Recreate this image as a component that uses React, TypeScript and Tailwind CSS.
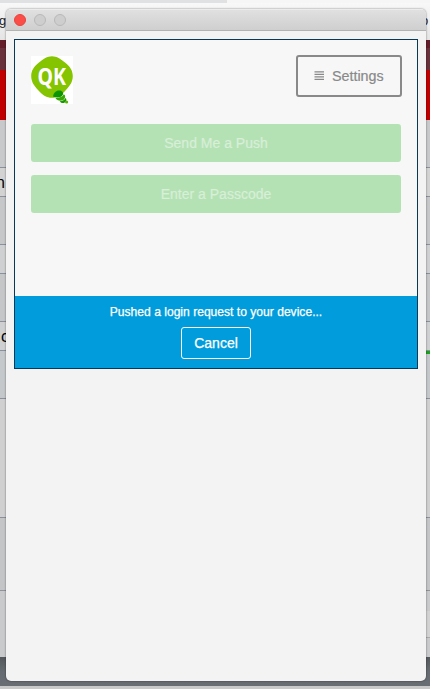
const strips = [
  'h-[3px] bg-[#e0e1e3]',
  'h-[37px] bg-gradient-to-b from-[#f8f8f9] to-[#e4e4e4]',
  'h-2 bg-[#641e29]',
  'h-[22px] bg-[#69313a]',
  'h-[50px] bg-[#c00000]',
  'h-12 border-b border-[#8a909d] bg-[#c7c9cb]',
  'h-[29px] border-b border-[#8a909d] bg-[#d3d3d4]',
  'h-12 border-b border-[#8a909d] bg-[#c5c7c9]',
  'h-[29px] border-b border-[#8a909d] bg-[#cfd0d1]',
  'h-12 border-b border-[#8a909d] bg-[#c4c6c8]',
  'h-[29px] border-b border-[#8a909d] bg-[#cfd0d1]',
  'h-12 border-b border-[#8a909d] bg-[#c5c8ca]',
  'h-[119px] border-b border-[#8a909d] bg-[#d0d0d0]',
  'h-[73px] border-b border-[#90939a] bg-[#c3c5c6]',
  'h-[66px] bg-[#c9cacb]',
  'h-[29px] bg-gradient-to-b from-[#54585c] via-[#656b70] to-[#686e73]',
  'h-[3px] bg-[#c9c9c9]',
]

function Backdrop() {
  return (
    <div className="absolute inset-0 flex flex-col overflow-hidden text-[#222]">
      {strips.map((strip, i) => (
        <div key={i} className={`shrink-0 ${strip}`} />
      ))}
      <div className="absolute left-[227px] top-0 h-[3px] w-[203px] bg-[#f6f6f7]" />
      <span className="absolute -left-px top-[13px] text-[13px] leading-4">g</span>
      <span className="absolute left-[421px] top-[13px] text-[13px] leading-4">o</span>
      <span className="absolute -left-[4px] top-[174px] text-base leading-[18px] text-black">n.</span>
      <span className="absolute left-px top-[328px] text-base leading-[18px] text-black">c</span>
      <div className="absolute right-0 top-[351px] h-[3px] w-1 bg-[#18a51c]" />
      <div className="absolute right-0 top-[611px] h-[27px] w-1 border-b border-[#a9aaab] bg-[#d2d2d2]" />
    </div>
  )
}

function TitleBar() {
  return (
    <div className="flex h-[22px] shrink-0 items-center gap-2 border-b border-t border-b-[#b3b3b3] border-t-[#ececec] bg-gradient-to-b from-[#e0e0e0] to-[#cfcfcf] pl-2">
      <span className="size-3 rounded-full border border-[#e8433d] bg-[#fc4e48]" />
      <span className="size-3 rounded-full border border-[#b8b8b8] bg-[#cecece]" />
      <span className="size-3 rounded-full border border-[#b8b8b8] bg-[#cecece]" />
    </div>
  )
}

function Logo() {
  return (
    <svg className="h-12 w-[42px] bg-white" viewBox="0 0 42 48">
      <path
        d="M21 .2C26 .2 29.500 3 34 6.500C39 10.500 41.800 14.500 41.800 20C41.800 26 39 29.500 34.500 34.500C30 39.500 26.500 41.800 21 41.800C15.500 41.800 12 39.500 7.500 34.500C3 29.500 .2 26 .2 20C.2 14.500 3 10.500 8 6.500C12.500 3 16 .2 21 .2Z"
        fill="#84c400"
      />
      <path
        d="M22 40.500C22.500 37 25 34.600 28 34.600C31 34.600 32.600 36.500 32 38.600C30.500 41.500 26.500 42.500 22 40.500Z"
        fill="#0c9500"
      />
      <path
        d="M24.500 42C28.500 42 31.500 40.800 32.800 38.300C34.800 39.500 34.600 42 32.700 43.700C30 45.500 26 45 24.500 42Z"
        fill="#3aa800"
      />
      <path d="M28.800 45.200C31.600 45.200 33.800 44 34.500 42C36.200 43.500 35.300 46 32.900 46.900C31 47.300 29.400 46.700 28.800 45.200Z" fill="#159700" />
      <circle cx="35.600" cy="46" r="1.600" fill="#58b400" />
      <text
        x="6.500"
        y="29.300"
        fill="#fff"
        fontFamily="'Noto Sans', sans-serif"
        fontSize="23"
        fontWeight="700"
        textLength="28.500"
        lengthAdjust="spacingAndGlyphs"
      >
        QK
      </text>
    </svg>
  )
}

function ActionButton({ label }: { label: string }) {
  return (
    <button className="h-[38px] w-full rounded-[3px] bg-[#b5e2b5] text-[14px] leading-5 text-[#d8efd8] [-webkit-text-stroke:0.2px]">
      {label}
    </button>
  )
}

export default function App() {
  return (
    <div className="relative h-[689px] w-[430px] overflow-hidden px-1.5 pt-[9px] font-['Liberation_Sans',Arial,sans-serif]">
      <Backdrop />
      <div className="relative flex h-[672px] w-[420px] flex-col overflow-hidden rounded-[5px] bg-[#f3f3f3] shadow-[0_0_2px_rgba(0,0,0,0.55)]">
        <TitleBar />
        <main className="mx-2 mt-2 flex h-[330px] flex-col border border-[#083a58] bg-[#f7f7f7]">
          <header className="flex items-start justify-between pl-4 pr-[15px] pt-[15px]">
            <div className="pt-px">
              <Logo />
            </div>
            <button className="flex h-[42px] w-[106px] items-center gap-[7px] rounded-[3px] border-2 border-[#898989] pl-4 text-[14.3px] leading-5 text-[#898989] [-webkit-text-stroke:0.2px]">
              <svg className="mb-px h-[9px] w-[11px]" viewBox="0 0 11 9" stroke="#898989" strokeWidth="1.300">
                <path d="M.5 .8H10M.5 3.300H10M.5 5.800H10M.5 8.300H10" />
              </svg>
              Settings
            </button>
          </header>
          <div className="mt-5 flex flex-col gap-[13px] px-4">
            <ActionButton label="Send Me a Push" />
            <ActionButton label="Enter a Passcode" />
          </div>
          <footer className="mt-auto flex h-[72px] flex-col items-center bg-[#009cdc] pt-2 text-white [-webkit-text-stroke:0.25px]">
            <p className="text-[12.100px] leading-4">Pushed a login request to your device...</p>
            <button className="mt-[7px] h-8 w-[70px] rounded-[3px] border border-white text-[14px] leading-5">
              Cancel
            </button>
          </footer>
        </main>
      </div>
    </div>
  )
}
